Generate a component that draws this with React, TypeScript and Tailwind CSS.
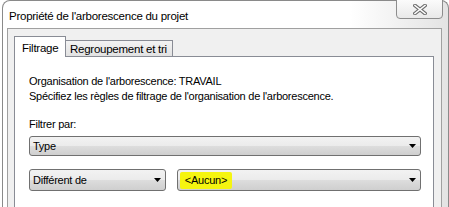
import React from 'react'

const font = { fontFamily: '"Liberation Sans", Arial, sans-serif' }

const Arrow = () => (
  <svg width="7" height="4" viewBox="0 0 7 4" className="shrink-0">
    <path d="M0 0h7L3.5 4z" fill="#000" />
  </svg>
)

const Combo = ({ width, height, children }: { width: string; height: string; children?: React.ReactNode }) => (
  <div
    className={`${width} ${height} flex items-center justify-between rounded-[3px] border border-[#707070] bg-[linear-gradient(#f2f2f2_0%,#ebebeb_50%,#dddddd_50%,#cfcfcf_100%)] pl-[2px] pr-[4px] text-black`}
  >
    <div className="flex items-center">{children}</div>
    <Arrow />
  </div>
)

const CloseGlyph = () => (
  <svg width="14" height="11" viewBox="0 0 14 11">
    <path d="M2 1.5L12 9.5M12 1.5L2 9.5" stroke="#6f6f6f" strokeWidth="3.6" strokeLinecap="square" />
    <path d="M2 1.5L12 9.5M12 1.5L2 9.5" stroke="#ffffff" strokeWidth="1.6" strokeLinecap="square" />
  </svg>
)

export default function App() {
  return (
    <div className="h-[207px] w-[449px] overflow-hidden bg-white text-[11px] tracking-[-0.25px]" style={font}>
      <div className="ml-[2px] flex h-[207px] w-[447px] flex-col rounded-t-[8px] border-x border-t border-[#8a8a8a] bg-[linear-gradient(to_right,#ffffff_78%,#e3e3e3)]">
        {/* title bar */}
        <div className="flex h-[27px] shrink-0 items-start justify-between">
          <div className="whitespace-nowrap pl-[6px] pt-[8px] text-[11.5px] leading-[14px] text-black">
            Propriété de l'arborescence du projet
          </div>
          <div className="mr-[5px] mt-[-2px] flex h-[20px] w-[47px] items-center justify-center rounded-b-[4px] border border-[#8d8d8d] bg-[linear-gradient(#fbfbfb,#e9e9e9)] pt-[1px]">
            <CloseGlyph />
          </div>
        </div>

        {/* client area */}
        <div className="ml-[4px] mr-[6px] flex flex-1 flex-col border-x border-t border-[#a0a0a0] bg-[#f0f0f0] pl-[6px] pr-[7px]">
          <div className="flex items-end pt-[7px]">
            <div className="relative z-10 mb-[-1px] flex h-[21px] w-[52px] items-start whitespace-nowrap border-x border-t border-[#898c95] bg-white pl-[7px] pt-[4px] text-[11.5px] leading-[14px]">
              Filtrage
            </div>
            <div className="flex h-[16px] w-[107px] items-start whitespace-nowrap border-r border-t border-[#898c95] bg-[linear-gradient(#f3f3f3,#e2e2e2)] pl-[4px] pt-[1px] text-[11.5px] leading-[14px]">
              Regroupement et tri
            </div>
          </div>

          <div className="flex flex-1 flex-col border-x border-t border-[#898c95] bg-white pl-[14px] pt-[17px] leading-[15px] text-black">
            <p className="whitespace-nowrap">Organisation de l'arborescence: TRAVAIL</p>
            <p className="whitespace-nowrap">Spécifiez les règles de filtrage de l'organisation de l'arborescence.</p>
            <p className="mt-[13px]">Filtrer par:</p>
            <div className="mt-[4px]">
              <Combo width="w-[392px]" height="h-[20px]">
                <span className="pl-[1px]">Type</span>
              </Combo>
            </div>
            <div className="mt-[13px] flex gap-[11px]">
              <Combo width="w-[137px]" height="h-[22px]">
                <span className="pl-[1px]">Différent de</span>
              </Combo>
              <Combo width="w-[244px]" height="h-[22px]">
                <span className="flex h-[17px] w-[52px] items-center justify-center rounded-[2px] bg-[#f5f510]">&lt;Aucun&gt;</span>
              </Combo>
            </div>
          </div>
        </div>
      </div>
    </div>
  )
}
